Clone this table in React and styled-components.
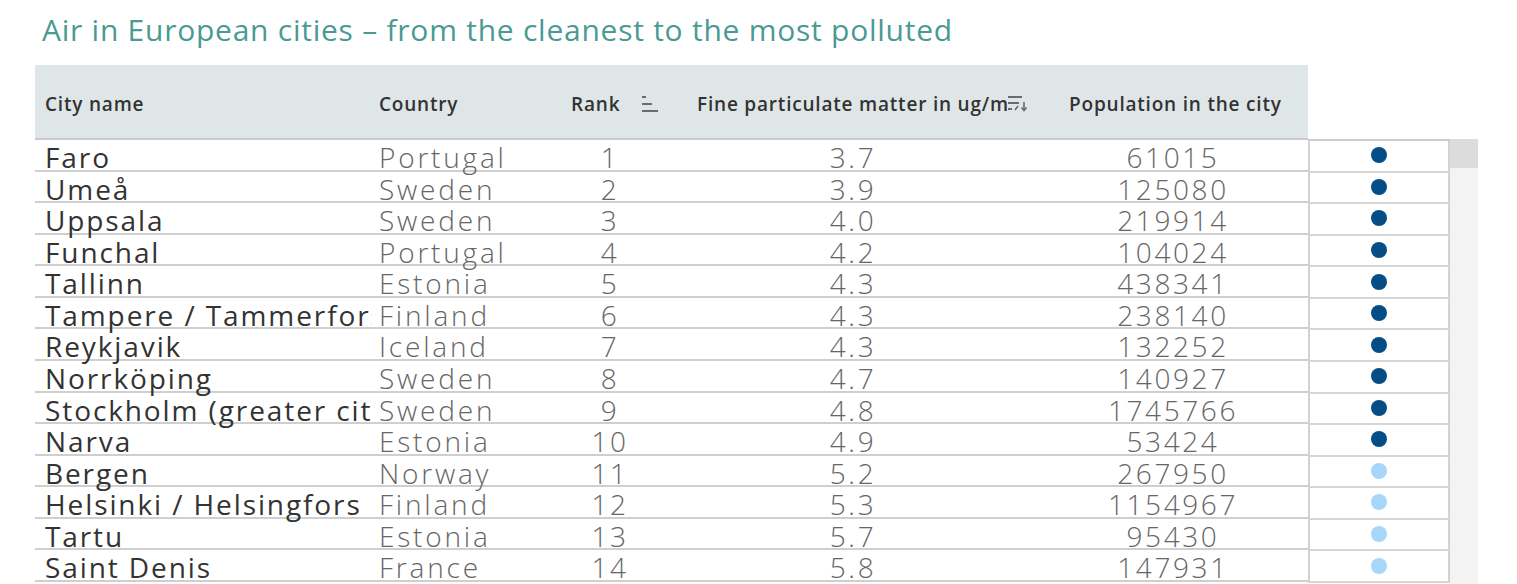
import React from "react";
import styled, { createGlobalStyle } from "styled-components";

const Global = createGlobalStyle`
  html, body { margin: 0; padding: 0; background: #fff; overflow: hidden; }
  body { font-family: "Open Sans", "Noto Sans", sans-serif; }
`;

const Page = styled.div`
  width: 1517px;
  height: 584px;
  overflow: hidden;
`;

const Title = styled.h1`
  margin: 10px 0 0 42px;
  font-size: 30px;
  line-height: 40px;
  font-weight: 400;
  letter-spacing: 0.75px;
  color: #4a9a93;
  white-space: nowrap;
`;

const Board = styled.div`
  display: flex;
  align-items: flex-start;
  margin: 15px 0 0 35px;
`;

const Table = styled.div`
  width: 1273px;
  flex: none;
`;

const COLS = "337px 188px 100px 386px 262px";

const HeaderRow = styled.div`
  display: grid;
  grid-template-columns: ${COLS};
  height: 75px;
  background: #dfe6e8;
  border-bottom: 2px solid #cbcbcb;
  box-sizing: border-box;
  align-items: center;
`;

const HeadCell = styled.div`
  position: relative;
  padding-left: ${(p) => p.$pad}px;
  padding-top: 5px;
  font-size: 19px;
  font-weight: 600;
  color: #333;
  white-space: nowrap;
  overflow: hidden;
  letter-spacing: 0.8px;
`;

const HeadLabel = styled.span`
  display: inline-block;
  max-width: ${(p) => (p.$max ? p.$max + "px" : "none")};
  overflow: hidden;
  vertical-align: bottom;
`;

const SortIcon = styled.svg`
  position: absolute;
  top: 50%;
  left: ${(p) => p.$left}px;
  transform: translateY(-50%);
  margin-top: 2px;
`;

const Row = styled.div`
  display: grid;
  grid-template-columns: ${COLS};
  height: 31.57px;
  border-bottom: 2px solid #cfcfcf;
  box-sizing: border-box;
  font-size: 28px;
  line-height: 29.57px;
  white-space: nowrap;
  & > div {
    padding-top: 3px;
    margin-bottom: -3px;
  }
`;

const CityCell = styled.div`
  padding-left: 10px;
  overflow-x: clip;
  overflow-y: visible;
  color: #333;
  font-weight: 400;
  letter-spacing: 1.9px;
`;

const CountryCell = styled.div`
  padding-left: 7px;
  color: #666;
  font-weight: 300;
  letter-spacing: 2.8px;
`;

const NumCell = styled.div`
  text-align: center;
  color: #666;
  font-weight: 300;
  letter-spacing: 2.6px;
  padding-left: ${(p) => p.$padL || 0}px;
  padding-right: ${(p) => p.$padR || 0}px;
`;

const Side = styled.div`
  display: flex;
  margin-top: 74px;
  flex: none;
`;

const DotColumn = styled.div`
  width: 142px;
  border-top: 2px solid #cbcbcb;
`;

const DotCell = styled.div`
  height: 31.57px;
  box-sizing: border-box;
  border-left: 2px solid #d2d2d2;
  border-right: 2px solid #d2d2d2;
  border-bottom: 2px solid #d6d6d6;
  display: flex;
  align-items: center;
  justify-content: center;
  padding-bottom: 1px;
`;

const Dot = styled.span`
  width: 16px;
  height: 16px;
  border-radius: 50%;
  background: ${(p) => (p.$light ? "#a6d6fa" : "#044d86")};
`;

const Scroll = styled.div`
  width: 28px;
  height: 460px;
  background: #f3f3f3;
  display: flex;
  flex-direction: column;
`;

const Thumb = styled.div`
  height: 29px;
  background: #dcdcdc;
`;

const rows = [
  ["Faro", "Portugal", 1, "3.7", 61015, false],
  ["Umeå", "Sweden", 2, "3.9", 125080, false],
  ["Uppsala", "Sweden", 3, "4.0", 219914, false],
  ["Funchal", "Portugal", 4, "4.2", 104024, false],
  ["Tallinn", "Estonia", 5, "4.3", 438341, false],
  ["Tampere / Tammerfors", "Finland", 6, "4.3", 238140, false],
  ["Reykjavik", "Iceland", 7, "4.3", 132252, false],
  ["Norrköping", "Sweden", 8, "4.7", 140927, false],
  ["Stockholm (greater city)", "Sweden", 9, "4.8", 1745766, false],
  ["Narva", "Estonia", 10, "4.9", 53424, false],
  ["Bergen", "Norway", 11, "5.2", 267950, true],
  ["Helsinki / Helsingfors", "Finland", 12, "5.3", 1154967, true],
  ["Tartu", "Estonia", 13, "5.7", 95430, true],
  ["Saint Denis", "France", 14, "5.8", 147931, true],
];

function RankSort({ left }) {
  return (
    <SortIcon $left={left} width="16" height="18" viewBox="0 0 16 18">
      <rect x="0" y="1" width="4" height="2" fill="#6b6b6b" />
      <rect x="0" y="8" width="10" height="2" fill="#6b6b6b" />
      <rect x="0" y="15" width="16" height="2" fill="#6b6b6b" />
    </SortIcon>
  );
}

function DescSort({ left }) {
  return (
    <SortIcon $left={left} width="22" height="18" viewBox="0 0 22 18">
      <rect x="0" y="0" width="22" height="18" fill="#dfe6e8" />
      <rect x="1" y="1" width="14" height="2" fill="#6b6b6b" />
      <rect x="1" y="7" width="11" height="2" fill="#6b6b6b" />
      <rect x="1" y="13" width="4" height="2" fill="#6b6b6b" />
      <path d="M8 15 L11 11" stroke="#6b6b6b" strokeWidth="1.6" />
      <path d="M17 7 V15" stroke="#6b6b6b" strokeWidth="1.6" />
      <path d="M14.5 12.5 L17 15.5 L19.5 12.5" stroke="#6b6b6b" strokeWidth="1.6" fill="none" />
    </SortIcon>
  );
}

export default function App() {
  return (
    <Page>
      <Global />
      <Title>Air in European cities – from the cleanest to the most polluted</Title>
      <Board>
        <Table>
          <HeaderRow>
            <HeadCell $pad={10}>City name</HeadCell>
            <HeadCell $pad={7}>Country</HeadCell>
            <HeadCell $pad={11}>
              Rank
              <RankSort left={82} />
            </HeadCell>
            <HeadCell $pad={37}>
              <HeadLabel $max={310}>Fine particulate matter in ug/m³</HeadLabel>
              <DescSort left={347} />
            </HeadCell>
            <HeadCell $pad={23}>Population in the city</HeadCell>
          </HeaderRow>
          {rows.map(([city, country, rank, pm, pop]) => (
            <Row key={city}>
              <CityCell>{city}</CityCell>
              <CountryCell>{country}</CountryCell>
              <NumCell>{rank}</NumCell>
              <NumCell>{pm}</NumCell>
              <NumCell $padR={8}>{pop}</NumCell>
            </Row>
          ))}
        </Table>
        <Side>
          <DotColumn>
            {rows.map(([city, , , , , light]) => (
              <DotCell key={city}>
                <Dot $light={light} />
              </DotCell>
            ))}
          </DotColumn>
          <Scroll>
            <Thumb />
          </Scroll>
        </Side>
      </Board>
    </Page>
  );
}
